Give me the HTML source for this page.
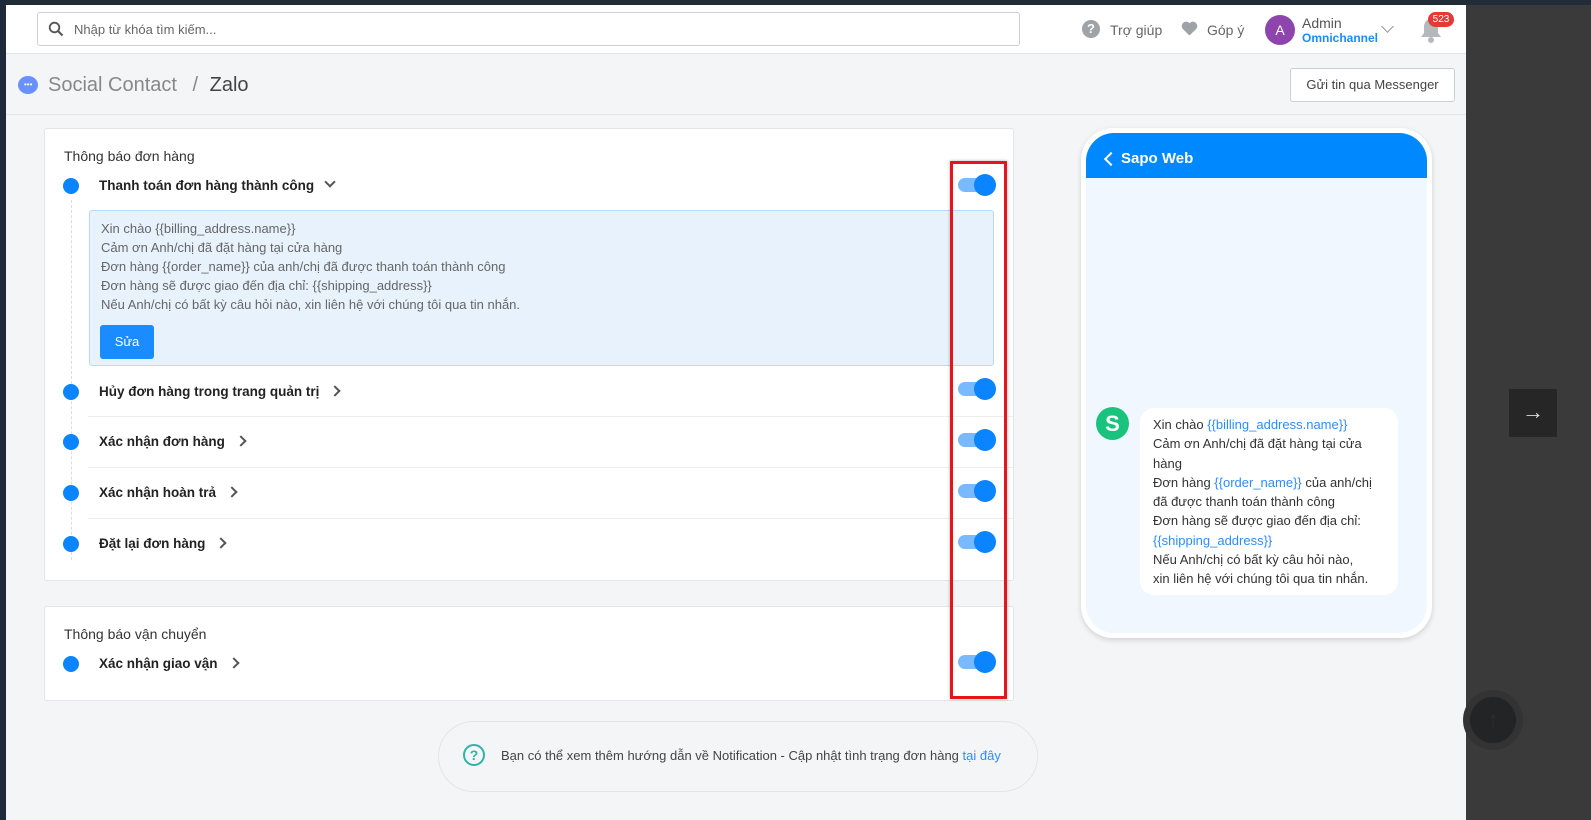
<!DOCTYPE html>
<html><head><meta charset="utf-8"><style>
*{box-sizing:border-box;margin:0;padding:0}
body{width:1591px;height:820px;overflow:hidden;background:#3a3a3a;font-family:"Liberation Sans","Noto Sans CJK SC",sans-serif;position:relative;color:#333}
.a{position:absolute}
.page{left:6px;top:5px;width:1460px;height:815px;background:#f4f5f7}
.top{left:6px;top:5px;width:1460px;height:49px;background:#fff;border-bottom:1px solid #e3e5e8}
.card{background:#fff;border:1px solid #e3e5e8;border-radius:3px}
.dot{width:16px;height:16px;border-radius:50%;background:#0a84ff}
.lbl{font-size:13.5px;color:#222;font-weight:bold;white-space:nowrap}
.tg{width:38px;height:22px}
.tg:before{content:"";position:absolute;left:0;top:4px;width:34px;height:14px;border-radius:7px;background:#78b9ff}
.tg:after{content:"";position:absolute;right:0;top:0;width:22px;height:22px;border-radius:50%;background:#0a84ff}
.sep{height:1px;background:#eceef0;left:88px;width:925px}
.chev{display:inline-block;width:8px;height:8px;border-right:2px solid #555;border-bottom:2px solid #555;transform:rotate(-45deg);margin-left:12px;vertical-align:1px}
.dn{transform:rotate(45deg);vertical-align:4px}
.msg{font-size:13px;color:#666;line-height:19px}
.b{color:#2f8cff}
</style></head><body>
<div class="a" style="left:0;top:0;width:1591px;height:5px;background:#222c38"></div>
<div class="a" style="left:0;top:0;width:6px;height:820px;background:#1e2a3b"></div>
<div class="a page"></div>
<div class="a top"></div>
<div class="a" style="left:37px;top:12px;width:983px;height:34px;border:1px solid #ccd0d5;border-radius:3px;background:#fff"></div>
<svg class="a" style="left:48px;top:21px" width="16" height="16" viewBox="0 0 16 16"><circle cx="6.5" cy="6.5" r="4.8" fill="none" stroke="#555" stroke-width="1.8"/><path d="M10 10l4.5 4.5" stroke="#555" stroke-width="2"/></svg>
<div class="a" style="left:74px;top:22px;font-size:13px;color:#666">Nhập từ khóa tìm kiếm...</div>
<div class="a" style="left:1082px;top:20px;width:18px;height:18px;border-radius:50%;background:#9ea3a8;color:#fff;font-size:13px;font-weight:bold;text-align:center;line-height:18px">?</div>
<div class="a" style="left:1110px;top:22px;font-size:14px;color:#666">Trợ giúp</div>
<svg class="a" style="left:1181px;top:21px" width="17" height="15" viewBox="0 0 17 15"><path d="M8.5 14.5L1.8 8A4.2 4.2 0 0 1 8.5 2.2 4.2 4.2 0 0 1 15.2 8z" fill="#9ea3a8"/></svg>
<div class="a" style="left:1207px;top:22px;font-size:14px;color:#666">Góp ý</div>
<div class="a" style="left:1265px;top:15px;width:30px;height:30px;border-radius:50%;background:#8e44ad;color:#fff;font-size:14px;text-align:center;line-height:30px">A</div>
<div class="a" style="left:1302px;top:15px;font-size:14px;color:#555">Admin</div>
<div class="a" style="left:1302px;top:31px;font-size:12px;color:#1a8cff;font-weight:bold">Omnichannel</div>
<div class="a" style="left:1383px;top:22px;width:9px;height:9px;border-right:1.5px solid #999;border-bottom:1.5px solid #999;transform:rotate(45deg)"></div>
<svg class="a" style="left:1419px;top:16px" width="24" height="28" viewBox="0 0 24 28"><path d="M12 3c-5 0-7 4-7 8v6l-3 4h20l-3-4v-6c0-4-2-8-7-8z" fill="#b5b9bd"/><circle cx="12" cy="24" r="3" fill="#b5b9bd"/></svg>
<div class="a" style="left:1428px;top:12px;width:26px;height:15px;border-radius:8px;background:#e53935;color:#fff;font-size:10px;text-align:center;line-height:15px">523</div>

<div class="a" style="left:18px;top:76px;width:20px;height:18px;border-radius:50%;background:#6a8fff"></div>
<div class="a" style="left:24px;top:84px;font-size:8px;color:#fff;line-height:2px">•••</div>
<div class="a" style="left:48px;top:74px;font-size:20px;color:#888">Social Contact <span style="margin:0 6px 0 10px">/</span> <span style="color:#444">Zalo</span></div>
<div class="a" style="left:1290px;top:68px;width:165px;height:34px;border:1px solid #ccd0d5;border-radius:3px;background:#fff;font-size:13px;color:#444;text-align:center;line-height:32px">Gửi tin qua Messenger</div>
<div class="a" style="left:6px;top:114px;width:1460px;height:1px;background:#e3e5e8"></div>

<div class="a card" style="left:44px;top:128px;width:970px;height:453px"></div>
<div class="a" style="left:64px;top:148px;font-size:14px;color:#333">Thông báo đơn hàng</div>
<div class="a" style="left:71px;top:200px;height:360px;border-left:1px dashed #ddd"></div>
<div class="a dot" style="left:63px;top:178px"></div>
<div class="a lbl" style="left:99px;top:178px">Thanh toán đơn hàng thành công<span class="chev dn"></span></div>
<div class="a tg" style="left:958px;top:174px"></div>
<div class="a" style="left:89px;top:210px;width:905px;height:156px;background:#e8f2fd;border:1px solid #b9d9f8;border-radius:3px"></div>
<div class="a msg" style="left:101px;top:219px">Xin chào {{billing_address.name}}<br>Cảm ơn Anh/chị đã đặt hàng tại cửa hàng<br>Đơn hàng {{order_name}} của anh/chị đã được thanh toán thành công<br>Đơn hàng sẽ được giao đến địa chỉ: {{shipping_address}}<br>Nếu Anh/chị có bất kỳ câu hỏi nào, xin liên hệ với chúng tôi qua tin nhắn.</div>
<div class="a" style="left:100px;top:325px;width:54px;height:34px;background:#1a8cff;border-radius:3px;color:#fff;font-size:13px;text-align:center;line-height:34px">Sửa</div>

<div class="a dot" style="left:63px;top:384px"></div><div class="a lbl" style="left:99px;top:384px">Hủy đơn hàng trong trang quản trị<span class="chev"></span></div><div class="a tg" style="left:958px;top:378px"></div>
<div class="a sep" style="top:416px"></div>
<div class="a dot" style="left:63px;top:434px"></div><div class="a lbl" style="left:99px;top:434px">Xác nhận đơn hàng<span class="chev"></span></div><div class="a tg" style="left:958px;top:429px"></div>
<div class="a sep" style="top:467px"></div>
<div class="a dot" style="left:63px;top:485px"></div><div class="a lbl" style="left:99px;top:485px">Xác nhận hoàn trả<span class="chev"></span></div><div class="a tg" style="left:958px;top:480px"></div>
<div class="a sep" style="top:518px"></div>
<div class="a dot" style="left:63px;top:536px"></div><div class="a lbl" style="left:99px;top:536px">Đặt lại đơn hàng<span class="chev"></span></div><div class="a tg" style="left:958px;top:531px"></div>

<div class="a card" style="left:44px;top:606px;width:970px;height:95px"></div>
<div class="a" style="left:64px;top:626px;font-size:14px;color:#333">Thông báo vận chuyển</div>
<div class="a dot" style="left:63px;top:656px"></div><div class="a lbl" style="left:99px;top:656px">Xác nhận giao vận<span class="chev"></span></div><div class="a tg" style="left:958px;top:651px"></div>

<div class="a" style="left:950px;top:161px;width:57px;height:538px;border:3px solid #e8141b;box-shadow:0 0 3px rgba(0,0,0,.3)"></div>

<div class="a" style="left:1081px;top:128px;width:351px;height:510px;background:#fff;border-radius:32px;box-shadow:0 2px 6px rgba(0,0,0,.15)"></div>
<div class="a" style="left:1086px;top:133px;width:341px;height:500px;background:#f0f7fe;border-radius:28px;overflow:hidden"><div style="height:45px;background:#0088ff"></div></div>
<div class="a" style="left:1106px;top:154px;width:10px;height:10px;border-left:2px solid #fff;border-bottom:2px solid #fff;transform:rotate(45deg)"></div>
<div class="a" style="left:1121px;top:150px;font-size:15px;color:#fff;font-weight:bold">Sapo Web</div>
<div class="a" style="left:1096px;top:407px;width:33px;height:33px;border-radius:50%;background:#19c37d;color:#fff;font-weight:bold;font-size:22px;text-align:center;line-height:33px">S</div>
<div class="a" style="left:1140px;top:408px;width:258px;height:187px;background:#fff;border-radius:14px"></div>
<div class="a" style="left:1153px;top:415px;font-size:13px;line-height:19.3px;color:#333">Xin chào <span class="b">{{billing_address.name}}</span><br>Cảm ơn Anh/chị đã đặt hàng tại cửa<br>hàng<br>Đơn hàng <span class="b">{{order_name}}</span> của anh/chị<br>đã được thanh toán thành công<br>Đơn hàng sẽ được giao đến địa chỉ:<br><span class="b">{{shipping_address}}</span><br>Nếu Anh/chị có bất kỳ câu hỏi nào,<br>xin liên hệ với chúng tôi qua tin nhắn.</div>

<div class="a" style="left:438px;top:721px;width:600px;height:71px;border:1px solid #e3e5e8;border-radius:36px"></div>
<div class="a" style="left:463px;top:744px;width:22px;height:22px;border:2px solid #2bb5a8;border-radius:50%;color:#2bb5a8;font-size:14px;font-weight:bold;text-align:center;line-height:18px">?</div>
<div class="a" style="left:501px;top:748px;font-size:13px;color:#444">Bạn có thể xem thêm hướng dẫn về Notification - Cập nhật tình trạng đơn hàng <span class="b">tại đây</span></div>

<div class="a" style="left:1509px;top:389px;width:48px;height:48px;background:#262626;color:#ddd;font-size:22px;text-align:center;line-height:46px">→</div>
<div class="a" style="left:1463px;top:690px;width:60px;height:60px;border-radius:50%;background:#333"></div>
<div class="a" style="left:1470px;top:697px;width:46px;height:46px;border-radius:50%;background:#232425;color:#2e2f30;font-size:22px;text-align:center;line-height:46px">↑</div>
</body></html>
